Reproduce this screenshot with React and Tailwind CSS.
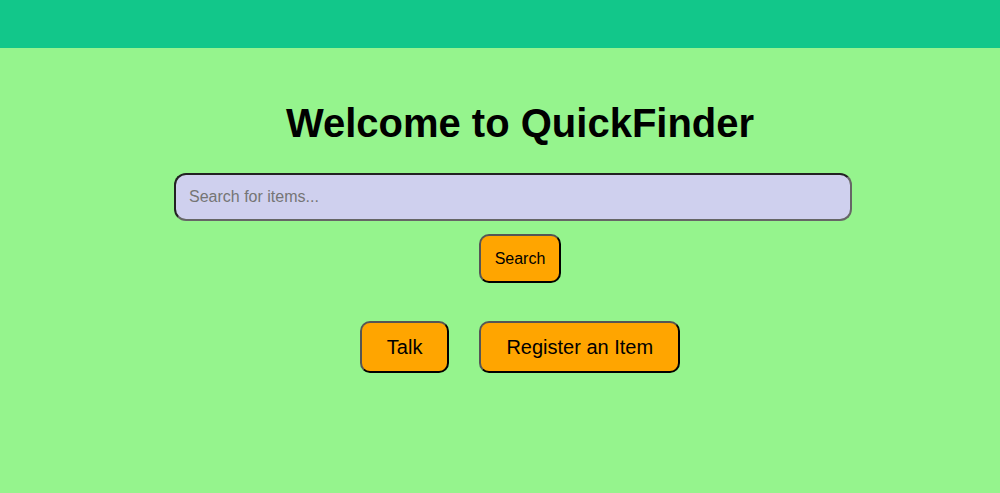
export default function App() {
  return (
    <div className="min-h-[493px] bg-[#95f48d] font-['Liberation_Sans',Arial,sans-serif]">
      <div className="h-12 bg-[#12c78a]" />
      <main className="flex flex-col items-center pl-10">
        <h1 className="mt-[52px] text-[40px] font-bold leading-[46px] text-black">
          Welcome to QuickFinder
        </h1>
        <input
          type="text"
          placeholder="Search for items..."
          className="mr-[14px] mt-[27px] h-12 w-[678px] rounded-xl border-2 border-[#222] border-b-[#666] border-r-[#666] bg-[#cfd0ee] px-[13px] text-base outline-none placeholder:text-[#757575]"
        />
        <button className="mt-[13px] h-[49px] rounded-[10px] border-2 border-[#555] border-b-black border-r-black bg-[#ffa500] px-[14px] text-base text-black">
          Search
        </button>
        <div className="mt-[38px] flex gap-[30px]">
          <button className="h-[52px] rounded-[10px] border-2 border-[#555] border-b-black border-r-black bg-[#ffa500] px-[25px] text-xl text-black">
            Talk
          </button>
          <button className="h-[52px] rounded-[10px] border-2 border-[#555] border-b-black border-r-black bg-[#ffa500] px-[25px] text-xl text-black">
            Register an Item
          </button>
        </div>
      </main>
    </div>
  );
}
